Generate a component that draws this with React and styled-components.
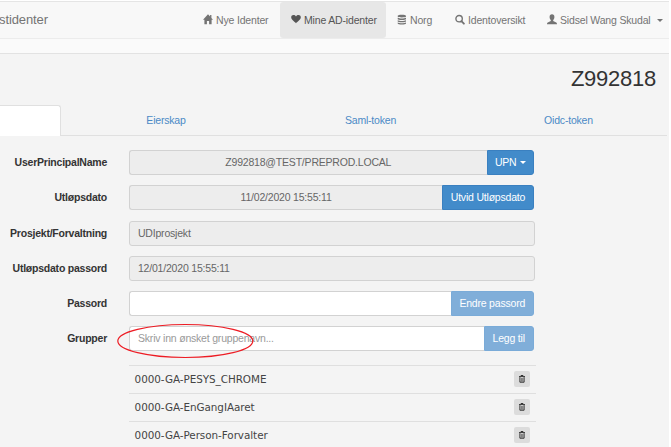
import React from "react";
import styled, { createGlobalStyle } from "styled-components";

const Global = createGlobalStyle`
  * { box-sizing: border-box; }
  body { margin: 0; background: #fff; overflow: hidden; }
`;

const Page = styled.div`
  width: 669px;
  height: 447px;
  overflow: hidden;
  background: #f4f4f4;
  color: #333;
  font: 10.5px/14px "Liberation Sans", Arial, sans-serif;
  letter-spacing: -0.2px;
  white-space: nowrap;
`;

const Header = styled.header`
  height: 54px;
  background: #fafafa;
  border-top: 1px solid #fff;
  border-bottom: 1px solid #e2e2e2;
`;

const Navbar = styled.nav`
  height: 38px;
  display: flex;
  justify-content: space-between;
  background: #f8f8f8;
  border-top: 1px solid #e5e5e5;
  border-bottom: 1px solid #ececec;
  color: #747474;
`;

const Brand = styled.a`
  font-size: 13px;
  letter-spacing: -0.1px;
  line-height: 35px;
  margin-left: -1px;
`;

const NavList = styled.div`
  display: flex;
`;

const NavItem = styled.a`
  width: ${(p) => p.$width}px;
  height: 36px;
  padding-left: 11px;
  display: flex;
  align-items: center;
  gap: 3px;
  border-radius: 3px;
  background: ${(p) => (p.$active ? "#e7e7e7" : "transparent")};
  color: ${(p) => (p.$active ? "#555" : "#747474")};
`;

const NavText = styled.span`
  padding-bottom: 1px;
  letter-spacing: -0.17px;
`;

const NavIcon = styled.svg`
  width: 10px;
  height: 11px;
  margin-bottom: 2px;
  flex: none;
  fill: currentColor;
`;

const Caret = styled.span`
  margin-left: 3px;
  border: 3px solid transparent;
  border-top-color: currentColor;
  border-bottom: 0;
`;

const Title = styled.h1`
  margin: 0;
  height: 51px;
  padding: 9px 13px 0 0;
  text-align: right;
  font-size: 22px;
  letter-spacing: -0.25px;
  line-height: 32px;
  font-weight: 400;
`;

const Tabs = styled.div`
  display: flex;
  height: 31px;
  margin-right: 2px;
  border-bottom: 1px solid #e0e0e0;
`;

const Tab = styled.a`
  width: ${(p) => p.$width}px;
  height: 31px;
  flex: none;
  text-align: center;
  line-height: 30px;
  color: #4b8ac6;
`;

const ActiveTab = styled(Tab)`
  background: #fff;
  border: 1px solid #e0e0e0;
  border-width: 1px 1px 0 0;
  border-radius: 0 3px 0 0;
`;

const Form = styled.main`
  padding-top: 14px;
  display: flex;
  flex-direction: column;
  gap: 10.27px;
`;

const FormRow = styled.div`
  display: grid;
  grid-template-columns: 107px 406.4px;
  column-gap: 21.6px;
  height: 25px;
`;

const Label = styled.label`
  text-align: right;
  font-weight: 700;
  line-height: 25px;
  letter-spacing: -0.23px;
`;

const InputGroup = styled.div`
  display: flex;
`;

const Field = styled.div`
  flex: 1;
  height: 25px;
  padding: 0 8.4px;
  border: 1px solid #d2d2d2;
  border-radius: ${(p) => (p.$joined ? "3px 0 0 3px" : "3px")};
  border-right-width: ${(p) => (p.$joined ? 0 : 1)}px;
  background: ${(p) => (p.$editable ? "#fff" : "#ededed")};
  color: ${(p) => (p.$editable ? "#999" : "#666")};
  text-align: ${(p) => (p.$center ? "center" : "left")};
  line-height: 22px;
`;

const Button = styled.button`
  width: ${(p) => p.$width}px;
  height: 25px;
  margin: 0 0.5px 0 0;
  padding: 0 1px 2px 0;
  display: flex;
  align-items: center;
  justify-content: center;
  border: 1px solid ${(p) => (p.$muted ? "#7aabd8" : "#3a80c0")};
  border-radius: 0 3px 3px 0;
  background: ${(p) => (p.$muted ? "#80aed9" : "#428bca")};
  color: #fff;
  font: inherit;
  letter-spacing: inherit;

  ${Caret} {
    margin-top: 2px;
  }
`;

const GroupList = styled.div`
  width: 407px;
  margin: 3px 0 0 128.6px;
  color: #444;
  font: 10.4px/14px "DejaVu Sans", Verdana, sans-serif;
  letter-spacing: -0.05px;
`;

const GroupRow = styled.div`
  height: 28px;
  padding: 0 6px;
  display: flex;
  align-items: center;
  justify-content: space-between;
  border-top: 1px solid #dfdfdf;
`;

const DeleteButton = styled.button`
  width: 16px;
  height: 16px;
  padding: 0;
  border: 0;
  border-radius: 2px;
  background: #dcdcdc;
  color: #333;
  display: grid;
  place-items: center;
`;

const Highlight = styled.svg`
  position: absolute;
  left: 116px;
  top: 323px;
  width: 139px;
  height: 36px;
  fill: none;
  stroke: #ed1c24;
  stroke-width: 1.2;
  pointer-events: none;
`;

const HomeIcon = () => (
  <NavIcon viewBox="0 0 10 11"><path d="M5 .3 0 5.7h1.4v4.5h2.5V7h2.2v3.2h2.5V5.7H10L8.4 4V1.1H7.1v1.5z" /></NavIcon>
);
const HeartIcon = () => (
  <NavIcon viewBox="0 0 10 11"><path d="M5 9.2C3.5 7.3.2 5.8.2 3.2.2.7 3.6.1 5 2.5 6.4.1 9.8.7 9.8 3.2 9.8 5.8 6.5 7.3 5 9.2z" /></NavIcon>
);
const DatabaseIcon = () => (
  <NavIcon viewBox="0 0 10 11">
    <path d="M.7 1.8C.7.3 9 .3 9 1.8v.8c0 1.2-8.3 1.2-8.3 0zM.7 3.8c1.8 1 6.5 1 8.3 0v1.4c0 1.1-8.3 1.1-8.3 0zM.7 6.2c1.8 1 6.5 1 8.3 0v1.3c0 1.1-8.3 1.1-8.3 0zM.7 8.5c1.8 1 6.5 1 8.3 0v1c0 1.4-8.3 1.4-8.3 0z" />
  </NavIcon>
);
const SearchIcon = () => (
  <NavIcon viewBox="0 0 10 11">
    <circle cx="4.1" cy="4.7" r="3.2" fill="none" stroke="currentColor" strokeWidth="1.4" />
    <path d="m6.4 7.1 2.5 2.6" stroke="currentColor" strokeWidth="1.8" strokeLinecap="round" />
  </NavIcon>
);
const UserIcon = () => (
  <NavIcon viewBox="0 0 10 11">
    <path d="M5 .3c1.5 0 2.5 1 2.4 2.6 0 1.4-.5 2.4-1.2 3.2v1l3 1.3c.6.3.8.8.8 1.8H0c0-1 .2-1.5.8-1.8l3-1.3v-1C3.1 5.3 2.6 4.3 2.6 2.9 2.5 1.3 3.5.3 5 .3z" />
  </NavIcon>
);
const TrashIcon = () => (
  <svg width="8" height="8" viewBox="0 0 8 8" fill="none" stroke="currentColor">
    <path d="M1 1.6h6M3 1V.5h2V1M1.9 2.2v5h4.2v-5" />
    <path d="M3.4 3v3.6M4.7 3v3.6" strokeWidth=".6" />
  </svg>
);

const navItems = [
  { text: "Nye Identer", width: 88, Icon: HomeIcon },
  { text: "Mine AD-identer", width: 106, Icon: HeartIcon, active: true },
  { text: "Norg", width: 58, Icon: DatabaseIcon },
  { text: "Identoversikt", width: 92, Icon: SearchIcon },
  { text: "Sidsel Wang Skudal", width: 133, Icon: UserIcon, menu: true },
];

const fields = [
  { label: "UserPrincipalName", value: "Z992818@TEST/PREPROD.LOCAL", center: true, action: "UPN", width: 47.5, menu: true },
  { label: "Utløpsdato", value: "11/02/2020 15:55:11", center: true, action: "Utvid Utløpsdato", width: 92 },
  { label: "Prosjekt/Forvaltning", value: "UDIprosjekt" },
  { label: "Utløpsdato passord", value: "12/01/2020 15:55:11" },
  { label: "Passord", value: "", editable: true, action: "Endre passord", width: 83.5, muted: true },
  { label: "Grupper", value: "Skriv inn ønsket gruppenavn...", editable: true, action: "Legg til", width: 50.5, muted: true },
];

const groups = ["0000-GA-PESYS_CHROME", "0000-GA-EnGangIAaret", "0000-GA-Person-Forvalter"];

export default function App() {
  return (
    <Page>
      <Global />
      <Header>
        <Navbar>
          <Brand>stidenter</Brand>
          <NavList>
            {navItems.map(({ text, width, Icon, active, menu }) => (
              <NavItem key={text} $width={width} $active={active}>
                <Icon />
                <NavText>{text}</NavText>
                {menu && <Caret />}
              </NavItem>
            ))}
          </NavList>
        </Navbar>
      </Header>
      <Title>Z992818</Title>
      <Tabs>
        <ActiveTab $width={61} />
        <Tab $width={210}>Eierskap</Tab>
        <Tab $width={199}>Saml-token</Tab>
        <Tab $width={197}>Oidc-token</Tab>
      </Tabs>
      <Form>
        {fields.map((f) => (
          <FormRow key={f.label}>
            <Label>{f.label}</Label>
            <InputGroup>
              <Field $joined={Boolean(f.action)} $editable={f.editable} $center={f.center}>{f.value}</Field>
              {f.action && (
                <Button $width={f.width} $muted={f.muted}>
                  {f.action}
                  {f.menu && <Caret />}
                </Button>
              )}
            </InputGroup>
          </FormRow>
        ))}
        <GroupList>
          {groups.map((name) => (
            <GroupRow key={name}>
              <span>{name}</span>
              <DeleteButton aria-label="Slett"><TrashIcon /></DeleteButton>
            </GroupRow>
          ))}
        </GroupList>
      </Form>
      <Highlight viewBox="0 0 139 36"><ellipse cx="69.3" cy="18" rx="67.5" ry="16.5" /></Highlight>
    </Page>
  );
}
